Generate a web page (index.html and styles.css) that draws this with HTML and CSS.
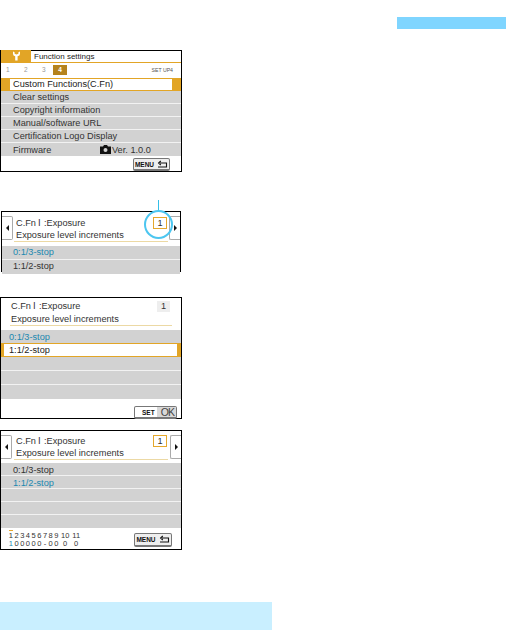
FILE: index.html
```html
<!DOCTYPE html>
<html lang="en">
<head>
    <meta charset="UTF-8">
    <meta name="viewport" content="width=device-width, initial-scale=1.0">
    <title>Custom Functions</title>
    <link rel="stylesheet" href="styles.css">
</head>
<body>

    <div class="top-bar"></div>

    <div class="screen menu-screen">
        <div class="menu-head">
            <div class="menu-tab">
                <svg width="9" height="10" viewBox="0 0 9 10"><path d="M1 0.5 L1 3 Q1 4.8 3.2 5.3 L3.2 9.5 L5.6 9.5 L5.6 5.3 Q8 4.8 8 3 L8 0.5 L6.4 1.2 L6.4 2.8 L4.5 3.4 L2.6 2.8 L2.6 1.2 Z" fill="#fff"/></svg>
            </div>
            <span class="menu-title">Function settings</span>
        </div>
        <div class="menu-tabs">
            <span class="tab-num">1</span>
            <span class="tab-num">2</span>
            <span class="tab-num">3</span>
            <span class="tab-num active">4</span>
            <span class="tab-setup">SET UP4</span>
        </div>
        <div class="menu-row selected"><span>Custom Functions(C.Fn)</span></div>
        <div class="menu-row">Clear settings</div>
        <div class="menu-row">Copyright information</div>
        <div class="menu-row">Manual/software URL</div>
        <div class="menu-row">Certification Logo Display</div>
        <div class="menu-row firmware">
            <span class="fw-name">Firmware</span>
            <svg class="cam" width="11" height="9" viewBox="0 0 11 9"><path fill-rule="evenodd" d="M0 1.5 H3 L4 0 H7 L8 1.5 H11 V9 H0 Z M5.5 3 A2 2 0 1 0 5.5 7 A2 2 0 1 0 5.5 3 Z" fill="#111"/></svg>
            <span>Ver. 1.0.0</span>
        </div>
        <div class="menu-foot">
            <div class="btn">MENU
                <svg width="11" height="9" viewBox="0 0 11 9"><path d="M1 7 H9.5 V3 H3 M3.8 1 L1.6 3 L3.8 5" fill="none" stroke="#111" stroke-width="1.1"/></svg>
            </div>
        </div>
    </div>

    <div class="screen cfn-cut">
        <div class="cfn-head">
            <div class="arrow-box left"><i class="tri-left"></i></div>
            <div class="cfn-title">
                <div class="cfn-line">C.Fn Ⅰ :Exposure</div>
                <div class="cfn-line">Exposure level increments</div>
                <div class="num-box orange">1</div>
            </div>
            <div class="arrow-box right"><i class="tri-right"></i></div>
        </div>
        <div class="rows">
            <div class="opt blue">0:1/3-stop</div>
            <div class="opt">1:1/2-stop</div>
        </div>
        <div class="callout-line"></div>
        <div class="callout-ring"></div>
    </div>

    <div class="screen cfn-set">
        <div class="cfn-title plain">
            <div class="cfn-line">C.Fn Ⅰ :Exposure</div>
            <div class="cfn-line">Exposure level increments</div>
            <div class="num-box">1</div>
        </div>
        <div class="rows">
            <div class="opt blue">0:1/3-stop</div>
            <div class="opt selected"><span>1:1/2-stop</span></div>
            <div class="opt"></div>
            <div class="opt"></div>
            <div class="opt"></div>
        </div>
        <div class="set-foot">
            <div class="btn set-btn"><b>SET</b><span>OK</span></div>
        </div>
    </div>

    <div class="screen cfn-full">
        <div class="cfn-head">
            <div class="arrow-box left"><i class="tri-left"></i></div>
            <div class="cfn-title">
                <div class="cfn-line">C.Fn Ⅰ :Exposure</div>
                <div class="cfn-line">Exposure level increments</div>
                <div class="num-box orange">1</div>
            </div>
            <div class="arrow-box right"><i class="tri-right"></i></div>
        </div>
        <div class="rows">
            <div class="opt">0:1/3-stop</div>
            <div class="opt blue">1:1/2-stop</div>
            <div class="opt"></div>
            <div class="opt"></div>
            <div class="opt"></div>
        </div>
        <div class="full-foot">
            <div class="fn-table">
                <span class="now">1</span><span>2</span><span>3</span><span>4</span><span>5</span><span>6</span><span>7</span><span>8</span><span>9</span><span>10</span><span>11</span>
                <span class="blue">1</span><span>0</span><span>0</span><span>0</span><span>0</span><span>0</span><span>-</span><span>0</span><span>0</span><span>0</span><span>0</span>
            </div>
            <div class="btn">MENU
                <svg width="11" height="9" viewBox="0 0 11 9"><path d="M1 7 H9.5 V3 H3 M3.8 1 L1.6 3 L3.8 5" fill="none" stroke="#111" stroke-width="1.1"/></svg>
            </div>
        </div>
    </div>

    <div class="bottom-band"></div>

</body>
</html>
```

FILE: styles.css
```css
html, body {
    margin: 0;
    padding: 0;
    height: 630px;
    overflow: hidden;
    background: #fff;
}

body {
    font-family: "Liberation Sans", Arial, sans-serif;
    color: #333;
    padding-top: 17px;
    box-sizing: border-box;
}

.top-bar {
    width: 109px;
    height: 12px;
    margin-left: auto;
    background: #7fd5ff;
}

.bottom-band {
    width: 272px;
    height: 28px;
    margin-top: 52px;
    background: #c9efff;
}

.screen {
    position: relative;
    box-sizing: border-box;
    width: 182px;
    border: 1px solid #000;
    background: #fff;
    font-size: 9.2px;
}

.menu-screen {
    height: 122px;
    margin-top: 21px;
}

.cfn-cut {
    width: 180px;
    height: 61px;
    margin: 39px 0 0 1px;
}

.cfn-set {
    height: 122px;
    margin-top: 25px;
}

.cfn-full {
    height: 120px;
    margin-top: 11px;
}

/* menu screen */
.menu-head {
    display: flex;
    height: 11px;
    border-bottom: 1px solid #e2a526;
    box-sizing: content-box;
    font-size: 8px;
}

.menu-tab {
    display: flex;
    align-items: center;
    justify-content: center;
    width: 30px;
    height: 12px;
    margin-top: -1px;
    background: #e2a526;
}

.menu-title {
    padding-left: 3px;
    line-height: 11px;
    color: #222;
}

.menu-tabs {
    display: flex;
    align-items: center;
    height: 15px;
    padding: 0 8px 2px 5px;
    box-sizing: border-box;
    font-size: 6.5px;
    color: #999;
}

.tab-num {
    width: 18px;
}

.tab-num.active {
    width: 14px;
    height: 10px;
    line-height: 10px;
    margin-left: -7px;
    text-align: center;
    font-weight: bold;
    color: #fff;
    background: #b5831c;
}

.tab-setup {
    margin-left: auto;
    font-size: 5.2px;
    color: #555;
}

.menu-row {
    display: flex;
    align-items: center;
    box-sizing: border-box;
    height: 13px;
    padding-left: 12px;
    background: #d2d2d2;
    border-bottom: 1px solid #f2f2f2;
}

.menu-row.selected {
    padding: 1px 9px;
    background: #e2a526;
    border: 0;
}

.menu-row.selected span {
    flex: 1;
    height: 11px;
    line-height: 11px;
    padding-left: 3px;
    background: #fff;
    color: #222;
}

.firmware {
    border-bottom: 0;
}

.fw-name {
    width: 87px;
}

.cam {
    margin-right: 1px;
}

.menu-foot {
    display: flex;
    justify-content: flex-end;
    padding: 2px 11px 0 0;
}

.btn {
    display: flex;
    align-items: center;
    justify-content: center;
    gap: 3px;
    box-sizing: border-box;
    width: 37px;
    height: 13px;
    border: 1px solid #777;
    border-width: 1px 1px 2px 1px;
    border-radius: 2px;
    background: #eee;
    color: #111;
    font-size: 6.5px;
    font-weight: bold;
}

/* custom function screens */
.cfn-head {
    display: flex;
    height: 30px;
}

.cfn-full .cfn-head {
    height: 29px;
}

.arrow-box {
    box-sizing: border-box;
    display: flex;
    align-items: center;
    justify-content: center;
    width: 11px;
    height: 24px;
    margin-top: 4px;
    border: 1px solid #aaa;
}

.arrow-box.left {
    border-left: 0;
    border-radius: 0 2px 2px 0;
}

.arrow-box.right {
    border-right: 0;
    border-radius: 2px 0 0 2px;
}

.tri-left, .tri-right {
    width: 0;
    height: 0;
    border-top: 3px solid transparent;
    border-bottom: 3px solid transparent;
}

.tri-left {
    border-right: 3px solid #111;
}

.tri-right {
    border-left: 3px solid #111;
}

.cfn-title {
    position: relative;
    box-sizing: border-box;
    flex: 1;
    margin: 0 1px;
    padding: 5px 0 0 2px;
    border-bottom: 1px solid #ecd9a4;
}

.cfn-full .cfn-title {
    margin: 0 2px;
    padding-top: 4px;
}

.cfn-title.plain {
    margin: 0 9px;
    height: 28px;
    padding: 2px 0 0 1px;
}

.cfn-line {
    height: 12px;
    line-height: 12px;
    white-space: nowrap;
}

.plain .cfn-line {
    height: 13px;
    line-height: 13px;
}

.num-box {
    position: absolute;
    right: 2px;
    top: 3px;
    box-sizing: border-box;
    width: 13px;
    height: 11px;
    line-height: 11px;
    text-align: center;
    background: #eee;
}

.num-box.orange {
    right: 1px;
    top: 5px;
    width: 14px;
    height: 12px;
    line-height: 10px;
    background: #fff;
    border: 1px solid #e5a82c;
}

.cfn-full .num-box.orange {
    top: 4px;
}

.rows {
    margin-top: 4px;
}

.cfn-full .rows {
    margin-top: 3px;
}

.opt {
    box-sizing: border-box;
    height: 14px;
    line-height: 13px;
    padding-left: 11px;
    background: #d2d2d2;
    border-bottom: 1px solid #f2f2f2;
}

.opt:last-child {
    border-bottom: 0;
}

.cfn-set .opt {
    padding-left: 8px;
}

.cfn-set .opt:first-child {
    height: 13px;
    line-height: 14px;
    border-bottom: 0;
}

.cfn-full .opt {
    height: 13px;
    line-height: 14px;
    padding-left: 12px;
}

.opt.blue {
    color: #2088b0;
}

.cfn-set .opt.selected {
    padding: 1px 4px 1px 3px;
    border: 0;
    background: #e2a526;
}

.opt.selected span {
    display: block;
    height: 12px;
    line-height: 13px;
    padding-left: 5px;
    background: #fff;
    color: #222;
}

.callout-line {
    position: absolute;
    left: 156px;
    top: -12px;
    width: 1px;
    height: 12px;
    background: #35bfe8;
}

.callout-ring {
    position: absolute;
    left: 142px;
    top: -2px;
    box-sizing: border-box;
    width: 29px;
    height: 29px;
    border: 2px solid #4cc6f0;
    border-radius: 50%;
}

.set-foot {
    display: flex;
    justify-content: flex-end;
    padding: 7px 4px 0 0;
}

.set-btn {
    width: 43px;
    gap: 0;
    background: #fff;
    justify-content: flex-start;
    padding-left: 7px;
}

.set-btn span {
    margin-left: auto;
    padding: 0 2px 0 4px;
    height: 100%;
    line-height: 10px;
    font-size: 10.5px;
    font-weight: normal;
    letter-spacing: -1px;
    color: #444;
    background: #d8d8d8;
}

.full-foot {
    display: flex;
    justify-content: space-between;
    align-items: flex-start;
    padding: 5px 9px 0 7px;
}

.full-foot .btn {
    width: 38px;
    height: 14px;
}

.fn-table {
    display: grid;
    grid-template-columns: repeat(9, 5.7px) 12px 10px;
    grid-auto-rows: 8px;
    margin-top: -1px;
    font-size: 7.5px;
    line-height: 8px;
    text-align: center;
}

.fn-table .now {
    position: relative;
}

.fn-table .now::before {
    content: "";
    position: absolute;
    left: 1px;
    top: -2px;
    width: 4px;
    height: 1px;
    background: #e5a82c;
}

.fn-table .blue {
    color: #2088b0;
}
```
